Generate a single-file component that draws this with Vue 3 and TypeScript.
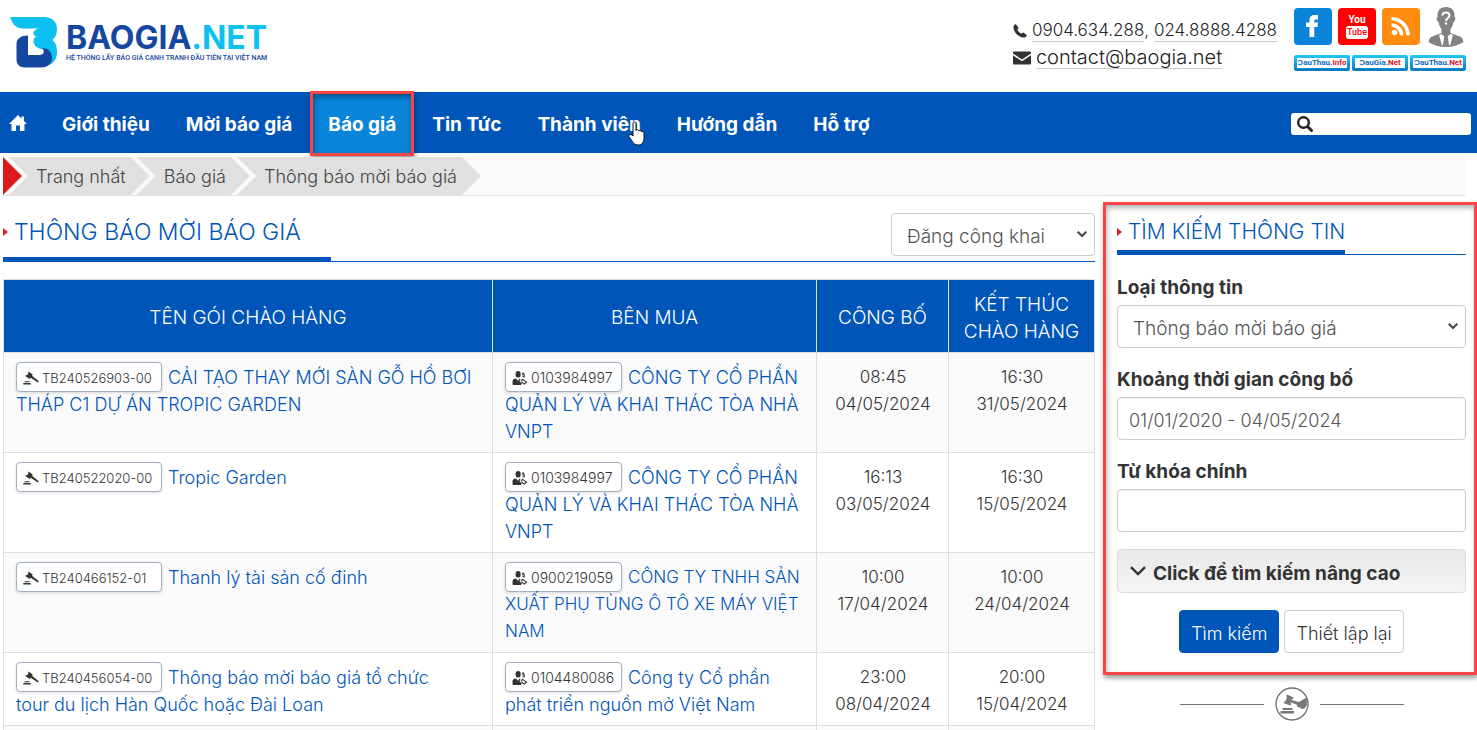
<script setup lang="ts">
import { ref } from 'vue'

interface Notice {
  code: string
  title: string
  buyerId: string
  buyer: string
  longBuyer?: boolean
  openTime: string
  openDate: string
  closeTime: string
  closeDate: string
}

const menu: string[] = ['Giới thiệu', 'Mời báo giá', 'Báo giá', 'Tin Tức', 'Thành viên', 'Hướng dẫn', 'Hỗ trợ']
const activeItem = 'Báo giá'
const hoveredItem = 'Thành viên'
const crumbs: string[] = ['Trang nhất', 'Báo giá', 'Thông báo mời báo giá']
const partners = [
  { head: 'ƆauThau.', tail: 'Info' },
  { head: 'ƆauGia.', tail: 'Net' },
  { head: 'ƆauThau.', tail: 'Net' },
]

const notices: Notice[] = [
  { code: 'TB240526903-00', title: 'CẢI TẠO THAY MỚI SÀN GỖ HỒ BƠI THÁP C1 DỰ ÁN TROPIC GARDEN', buyerId: '0103984997', buyer: 'CÔNG TY CỔ PHẦN QUẢN LÝ VÀ KHAI THÁC TÒA NHÀ VNPT', openTime: '08:45', openDate: '04/05/2024', closeTime: '16:30', closeDate: '31/05/2024' },
  { code: 'TB240522020-00', title: 'Tropic Garden', buyerId: '0103984997', buyer: 'CÔNG TY CỔ PHẦN QUẢN LÝ VÀ KHAI THÁC TÒA NHÀ VNPT', openTime: '16:13', openDate: '03/05/2024', closeTime: '16:30', closeDate: '15/05/2024' },
  { code: 'TB240466152-01', title: 'Thanh lý tài sản cố đinh', buyerId: '0900219059', buyer: 'CÔNG TY TNHH SẢN XUẤT PHỤ TÙNG Ô TÔ XE MÁY VIỆT NAM', longBuyer: true, openTime: '10:00', openDate: '17/04/2024', closeTime: '10:00', closeDate: '24/04/2024' },
  { code: 'TB240456054-00', title: 'Thông báo mời báo giá tổ chức\ntour du lịch Hàn Quốc hoặc Đài Loan', buyerId: '0104480086', buyer: 'Công ty Cổ phần\nphát triển nguồn mở Việt Nam', openTime: '23:00', openDate: '08/04/2024', closeTime: '20:00', closeDate: '15/04/2024' },
]

const visibility = ref('Đăng công khai')
const infoType = ref('Thông báo mời báo giá')
const period = ref('01/01/2020 - 04/05/2024')
const keyword = ref('')
const siteQuery = ref('')
</script>

<template>
  <div class="page">
    <header class="top">
      <a class="logo" href="#" aria-label="BAOGIA.NET">
        <svg class="mark" viewBox="0 0 48 51" aria-hidden="true">
          <path fill="#0cc0f0" d="M0 0H34C42.500 0 47 5 47 12C47 17 45.500 20 42.500 23C46 26 47 30 47 35C47 41 44.500 45.500 39.500 48L36 33C28 32 23.500 29 23.500 24.500C23.500 22 24.500 20.500 26.500 19.500C24 19 23 17 23.500 15.500C24.500 13 27 11.500 30 11.500H13C6 11.500 2.500 7 0 0Z" />
          <path fill="#1647a0" d="M18 18.500C11 18.500 6.500 21.500 6.500 27V42C6.500 47.500 9.500 50.500 15 50.500H31C38 50.500 42 46.500 42 41C42 35 38.500 31 32.500 31C35 35 33.500 38 29.500 38H18Z" />
        </svg>
        <span class="wordmark">
          <span class="brand">BAOGIA<span class="cyan">.NET</span></span>
          <span class="slogan">HỆ THỐNG LẤY BÁO GIÁ CẠNH TRANH ĐẦU TIÊN TẠI VIỆT NAM</span>
        </span>
      </a>

      <div class="reach">
        <div class="contact">
          <p>
            <svg class="ic-phone" viewBox="0 0 14 14" aria-hidden="true"><path fill="#333" d="M3.200.4L5.500 3.800C5.700 4.300 5.300 4.700 4.300 5.500C5 7.300 6.800 9 8.500 9.700C9.300 8.700 9.700 8.300 10.200 8.500L13.600 10.700C14 12.300 12.300 13.700 10.700 13.600C5.500 13.300.7 8.500.4 3.300C.3 1.700 1.700 0 3.200.4Z" /></svg>
            <a href="#">0904.634.288</a>, <a href="#">024.8888.4288</a>
          </p>
          <p>
            <svg class="ic-mail" viewBox="0 0 18 14" aria-hidden="true"><path fill="#333" d="M1 .5H17Q18 .5 18 1.500V2.500L9 8.500L0 2.500V1.500Q0 .5 1 .5ZM0 4.300L9 10.300L18 4.300V12.500Q18 13.500 17 13.500H1Q0 13.500 0 12.500Z" /></svg>
            <a class="mail" href="#">contact@baogia.net</a>
          </p>
        </div>

        <div class="links">
          <div class="social">
            <a class="tile fb" href="#" aria-label="Facebook">
              <svg viewBox="0 0 37 37"><path fill="#fff" d="M15.500 29V19H12V14.500H15.500V12C15.500 8.500 17.500 7 20.500 7H24V11.500H22C20.700 11.500 20.300 12 20.300 13V14.500H24L23.500 19H20.300V29Z" /></svg>
            </a>
            <a class="tile yt" href="#" aria-label="YouTube"><span>You</span><b>Tube</b></a>
            <a class="tile rss" href="#" aria-label="RSS">
              <svg viewBox="0 0 37 37"><circle cx="12.500" cy="24.500" r="2.800" fill="#fff" /><path fill="none" stroke="#fff" stroke-width="3.600" d="M9.500 17.200A10 10 0 0 1 19.600 27.300M9.500 10.800A16.500 16.500 0 0 1 26 27.300" /></svg>
            </a>
            <a class="user" href="#" aria-label="Tài khoản">
              <svg viewBox="0 0 36 40">
                <path fill="#828282" d="M18 0C24 0 27 4 26.500 10C28 10 27.500 14 25.500 15C25 18 24 20 22.500 22V26L33 30Q35.500 32 35.500 35Q28 40 18 40Q8 40 .5 35Q.5 32 3 30L13.500 26V22C12 20 11 18 10.500 15C8.500 14 8 10 9.500 10C9 4 12 0 18 0Z" />
                <path fill="#fff" d="M13.500 27L16.200 29.300L15 38H13.800L11 28ZM22.500 27L19.800 29.300L21 38H22.200L25 28Z" />
                <path fill="none" stroke="#fff" stroke-width="2" d="M14.500 8.500C14.500 4.500 21.500 4.500 21.500 8.500C21.500 11 18 11 18 14" /><circle cx="18" cy="16.500" r="1.200" fill="#fff" />
              </svg>
            </a>
          </div>
          <div class="partners">
            <a v-for="(p, i) in partners" :key="i" href="#">{{ p.head }}<em>{{ p.tail }}</em></a>
          </div>
        </div>
      </div>
    </header>

    <nav class="bar">
      <a class="home" href="#" aria-label="Trang nhất">
        <svg viewBox="0 0 18 16"><path fill="#fff" d="M9 0L12.500 3.500V1.500H15V6L18 9H15.500V16H11V10.500H7V16H2.500V9H0Z" /></svg>
      </a>
      <a v-for="m in menu" :key="m" class="item" :class="{ active: m === activeItem }" href="#">
        {{ m }}
        <svg v-if="m === hoveredItem" class="hand" viewBox="0 0 17 25" aria-hidden="true"><path fill="#fff" stroke="#111" stroke-width="1" d="M5 15V2.500C5 .3 8 .3 8 2.500V9.500C8.500 8 10.500 8.300 10.700 10C11.500 8.800 13.200 9.200 13.400 10.800C14.500 10 16 10.600 16 12.500V17C16 21 14 24 10.500 24C6.500 24 5.500 22.500 3.700 19.500L.8 15.500C.5 13.500 2.800 12.800 4 14.200Z" /></svg>
      </a>
      <label class="site-search">
        <svg viewBox="0 0 18 18" aria-hidden="true"><circle cx="7.500" cy="7.500" r="5.300" fill="none" stroke="#222" stroke-width="2.400" /><path stroke="#222" stroke-width="3" stroke-linecap="round" d="M12 12L15.500 15.500" /></svg>
        <input v-model="siteQuery" type="text" aria-label="Tìm kiếm trên trang" />
      </label>
    </nav>

    <div class="wrap">
      <div class="crumbs">
        <span class="lead"></span>
        <a v-for="c in crumbs" :key="c" href="#">{{ c }}</a>
      </div>

      <div class="cols">
        <main>
          <div class="headline">
            <h1>THÔNG BÁO MỜI BÁO GIÁ</h1>
            <span class="drop">
              <select v-model="visibility" aria-label="Hình thức đăng"><option>Đăng công khai</option></select>
              <svg viewBox="0 0 10 6" aria-hidden="true"><path fill="none" stroke="#444" stroke-width="2" d="M.7.7L5 5L9.300.7" /></svg>
            </span>
          </div>

          <table>
            <colgroup><col class="c-name" /><col class="c-buyer" /><col class="c-open" /><col class="c-close" /></colgroup>
            <thead>
              <tr><th>TÊN GÓI CHÀO HÀNG</th><th>BÊN MUA</th><th>CÔNG BỐ</th><th>KẾT THÚC<br />CHÀO HÀNG</th></tr>
            </thead>
            <tbody>
              <tr v-for="n in notices" :key="n.code">
                <td>
                  <a class="badge code" href="#"><svg viewBox="0 0 16 13" aria-hidden="true"><path fill="#333" d="M5.500 0L9.800 3L9 4.300L15.800 9.800L14.800 11L7.700 6.300L6.800 7.500L2.200 4.600L3 3.500L3.800 3.900L5.700 1.400L4.900.9ZM1.500 9.700H6.500V10.700H1.500ZM.3 11.500H7.700V13H.3Z" /></svg>{{ n.code }}</a>
                  <a class="name" href="#">{{ n.title }}</a>
                </td>
                <td :class="{ long: n.longBuyer }">
                  <a class="badge" href="#"><svg viewBox="0 0 16 15" aria-hidden="true"><path fill="#333" d="M6 0A2.700 2.700 0 0 1 8.700 2.700V4.200A2.700 2.700 0 0 1 3.300 4.200V2.700A2.700 2.700 0 0 1 6 0ZM3.500 8L6 10.500L7.500 8L8.500 8.500L7.500 11L10 13.500L9 15H1Q0 15 0 14V11Q0 8.500 3.500 8Z" /><path fill="none" stroke="#333" stroke-width="1.200" d="M9 10.500L11 9L15 12L12.500 14L9.500 11.500M12.500 2.300H11V4H12.500V6H10.800" /></svg>{{ n.buyerId }}</a>
                  <a class="name" href="#">{{ n.buyer }}</a>
                </td>
                <td class="when">{{ n.openTime }}<br />{{ n.openDate }}</td>
                <td class="when">{{ n.closeTime }}<br />{{ n.closeDate }}</td>
              </tr>
              <tr><td></td><td></td><td></td><td></td></tr>
            </tbody>
          </table>
        </main>

        <aside>
          <form class="finder" @submit.prevent>
            <div class="subhead"><h2>TÌM KIẾM THÔNG TIN</h2></div>

            <label class="field-label" for="info-type">Loại thông tin</label>
            <span class="drop wide">
              <select id="info-type" v-model="infoType"><option>Thông báo mời báo giá</option></select>
              <svg viewBox="0 0 10 6" aria-hidden="true"><path fill="none" stroke="#444" stroke-width="2" d="M.7.7L5 5L9.300.7" /></svg>
            </span>

            <label class="field-label" for="period">Khoảng thời gian công bố</label>
            <input id="period" v-model="period" class="text" type="text" />

            <label class="field-label" for="keyword">Từ khóa chính</label>
            <input id="keyword" v-model="keyword" class="text" type="text" />

            <button class="advanced" type="button">
              <svg viewBox="0 0 16 10" aria-hidden="true"><path fill="none" stroke="#333" stroke-width="2.400" d="M1 1.200L8 8L15 1.200" /></svg>Click để tìm kiếm nâng cao
            </button>

            <div class="actions">
              <button class="go" type="submit">Tìm kiếm</button>
              <button class="reset" type="reset">Thiết lập lại</button>
            </div>
          </form>

          <div class="divider">
            <i></i>
            <svg viewBox="0 0 34 34" aria-hidden="true">
              <circle cx="17" cy="17" r="16" fill="#fff" stroke="#6e6e6e" stroke-width="1.300" />
              <path fill="#777" d="M12 7.500L18.500 10.500L18 12L17 12L15.500 16L16.200 17L15.500 18.500L8.500 16L9.300 14.500L10.300 14.600L12 10.500L11.300 9.300ZM16.500 13L24 15L31.500 10.500L32 18L29.500 21.500L27 22L25 20.500L22.500 20L21.500 17.500L16 15.500ZM7.500 21H17.500V23H7.500ZM5.500 24H19V26.500H5.500Z" />
            </svg>
            <i></i>
          </div>
        </aside>
      </div>
    </div>
  </div>
</template>

<style>
body {
  margin: 0;
  background: #fff;
}
</style>

<style scoped>
.page {
  height: 100vh;
  overflow: hidden;
  font-family: Inter, "Liberation Sans", sans-serif;
  font-size: 18px;
  font-weight: 300;
  line-height: 27px;
  color: #333;
}
.page * {
  box-sizing: border-box;
}
a {
  color: #0055b8;
  text-decoration: none;
}
p, h1, h2 {
  margin: 0;
  font-weight: 300;
}
input, select, button {
  font: inherit;
  color: inherit;
}

.top {
  display: flex;
  justify-content: space-between;
  height: 92px;
  padding: 0 11px 0 10px;
}
.logo {
  display: flex;
  gap: 8px;
  padding-top: 17px;
  height: 68px;
}
.mark {
  width: 48px;
  height: 51px;
}
.wordmark {
  display: flex;
  flex-direction: column;
  padding-top: 6px;
  color: #1647a0;
}
.brand {
  font-size: 32px;
  line-height: 30px;
  font-weight: 700;
}
.cyan {
  color: #0cc0f0;
}
.slogan {
  font-family: Roboto, sans-serif;
  font-size: 7px;
  line-height: 10px;
  font-weight: 500;
}
.reach {
  display: flex;
  gap: 17px;
}
.contact {
  padding-top: 17px;
}
.contact p {
  display: flex;
  align-items: center;
  height: 27px;
  font-size: 17px;
  white-space: pre;
}
.contact a {
  color: #222;
  line-height: 22px;
  border-bottom: 1px solid #ccc;
}
.contact .mail {
  font-size: 20px;
}
.ic-phone {
  width: 14px;
  height: 14px;
  margin-right: 5px;
}
.ic-mail {
  width: 18px;
  height: 14px;
  margin-right: 5px;
}
.links {
  padding-top: 7px;
}
.social {
  display: flex;
  gap: 6px;
  height: 40px;
}
.tile {
  width: 38px;
  height: 37px;
  margin-top: 1px;
  border-radius: 4px;
}
.tile svg {
  display: block;
  width: 37px;
  height: 37px;
}
.fb {
  background: #0984d8;
}
.yt {
  display: flex;
  flex-direction: column;
  align-items: center;
  padding-top: 6px;
  background: #f00;
  color: #fff;
  font: 700 10px/11px Roboto, sans-serif;
}
.yt b {
  margin-top: 1px;
  padding: 0 1px;
  border-radius: 3px;
  background: #fff;
  color: #f00;
  font-size: 9px;
  font-weight: 500;
  line-height: 13px;
}
.rss {
  background: #ff8c0e;
}
.user svg {
  display: block;
  width: 36px;
  height: 40px;
}
.user {
  margin-left: 2px;
}
.partners {
  display: flex;
  gap: 2px;
  margin-top: 8px;
}
.partners a {
  width: 56px;
  height: 16px;
  border: 3px solid transparent;
  border-radius: 2px;
  background: linear-gradient(#fff, #fff) padding-box, linear-gradient(#22c8f8, #0878c0) border-box;
  text-align: center;
  font: 700 8px/10px Roboto, sans-serif;
  color: #0a6ab8;
}
.partners em {
  font-style: normal;
  color: #e8101c;
}

.bar {
  display: flex;
  align-items: stretch;
  height: 61px;
  padding: 0 6px 0 9px;
  background: #0055b8;
}
.bar a {
  position: relative;
  display: flex;
  align-items: center;
  color: #fff;
  font-size: 19px;
  font-weight: 700;
}
.home {
  margin-right: 17px;
}
.home svg {
  width: 18px;
  height: 16px;
}
.item {
  padding: 4px 18px 0;
}
.item.active {
  background: #0984d8;
}
.item.active::after {
  content: "";
  position: absolute;
  inset: -1px 0 -3px 0;
  border: 3px solid #f94545;
  box-shadow: 1px 3px 5px rgba(0, 0, 0, 0.4), inset 1px 3px 5px rgba(0, 0, 0, 0.4);
}
.hand {
  position: absolute;
  right: 14px;
  top: 29px;
  width: 17px;
  height: 25px;
}
.site-search {
  display: flex;
  align-items: center;
  align-self: center;
  width: 180px;
  height: 22px;
  margin: 2px 0 0 auto;
  padding-left: 5px;
  border-radius: 3px;
  background: #fff;
}
.site-search svg {
  width: 18px;
  height: 18px;
}
.site-search input {
  flex: 1;
  min-width: 0;
  height: 20px;
  border: 0;
  outline: 0;
  background: transparent;
  font-size: 14px;
}

.wrap {
  padding: 4px 11px 0 3px;
}
.crumbs {
  display: flex;
  height: 39px;
  border-bottom: 1px solid #e4e4e4;
  background: #fafafa;
}
.crumbs a {
  margin-left: -13px;
  padding: 1px 24px 0 27px;
  background: #e0e0e0;
  clip-path: polygon(0 0, calc(100% - 19px) 0, 100% 50%, calc(100% - 19px) 100%, 0 100%, 19px 50%);
  color: #444;
  line-height: 37px;
}
.lead {
  width: 19px;
  background: #dc1a1c;
  clip-path: polygon(0 0, 100% 50%, 0 100%);
}

.cols {
  display: grid;
  grid-template-columns: minmax(0, 1fr) 349px;
  gap: 22px;
}
.headline {
  display: flex;
  justify-content: space-between;
  height: 66px;
  border-bottom: 1px solid #0055b8;
}
h1, h2 {
  display: flex;
  align-items: center;
  color: #0055b8;
  font-size: 23px;
  line-height: 30px;
  white-space: nowrap;
}
h1::before, h2::before {
  content: "";
  margin-right: 6px;
  border-left: 5px solid #dc1a1c;
  border-top: 4px solid transparent;
  border-bottom: 4px solid transparent;
}
h1 {
  height: 66px;
  padding: 10px 30px 0 0;
  border-bottom: 5px solid #0055b8;
}
.drop {
  position: relative;
  display: block;
  width: 204px;
  height: 43px;
  margin-top: 17px;
}
.drop select {
  display: block;
  width: 100%;
  height: 100%;
  padding: 3px 30px 0 15px;
  appearance: none;
  border: 1px solid #ccc;
  border-radius: 4px;
  background: #fff;
  color: #555;
  font-size: 19px;
}
.drop svg {
  position: absolute;
  right: 8px;
  top: 18px;
  width: 10px;
  height: 6px;
  pointer-events: none;
}
.wide {
  width: 100%;
  margin: 0;
}

table {
  width: 100%;
  margin-top: 17px;
  border-collapse: collapse;
  table-layout: fixed;
}
.c-name {
  width: 489px;
}
.c-buyer {
  width: auto;
}
.c-open {
  width: 132px;
}
.c-close {
  width: 146px;
}
th, td {
  border: 1px solid #ddd;
}
th {
  height: 73px;
  padding: 3px 10px 0;
  background: #0055b8;
  color: #fff;
  font-size: 19px;
  font-weight: 300;
}
td {
  padding: 11px 11px 7px 12px;
  vertical-align: top;
}
tbody tr:nth-child(odd) {
  background: #fafafa;
}
.when {
  font-size: 17px;
  text-align: center;
}
.long {
  font-size: 17px;
}
.name {
  white-space: pre-line;
}
.badge {
  display: inline-block;
  min-width: 117px;
  height: 30px;
  margin: -2px 6px -2px 0;
  padding: 2px 6px 0;
  border: 1px solid #a3b0bf;
  border-radius: 4px;
  background: #fff;
  box-shadow: 0 1px 3px rgba(0, 0, 0, 0.15);
  color: #333;
  font-size: 14px;
  line-height: 26px;
  vertical-align: top;
  white-space: nowrap;
}
.code {
  min-width: 146px;
  font-size: 13px;
}
.badge svg {
  width: 16px;
  height: 14px;
  margin-right: 3px;
  vertical-align: -2px;
}

.finder {
  position: relative;
  padding-bottom: 22px;
}
.finder::after {
  content: "";
  position: absolute;
  inset: 6px -11px 0 -14px;
  border: 3px solid #f94545;
  box-shadow: 1px 3px 5px rgba(0, 0, 0, 0.4), inset 1px 3px 5px rgba(0, 0, 0, 0.3);
  pointer-events: none;
}
.subhead {
  display: flex;
  height: 59px;
  margin-bottom: 19px;
  border-bottom: 1px solid #0055b8;
}
h2 {
  height: 59px;
  padding-top: 17px;
  border-bottom: 5px solid #0055b8;
  font-size: 21px;
}
.field-label {
  display: block;
  margin-bottom: 4px;
  font-size: 19px;
  font-weight: 700;
}
.text {
  display: block;
  width: 100%;
  height: 43px;
  padding: 3px 11px 0;
  border: 1px solid #ccc;
  border-radius: 4px;
  background: #fff;
  box-shadow: inset 0 1px 1px rgba(0, 0, 0, 0.08);
  color: #555;
}
.drop + .field-label, .text + .field-label {
  margin-top: 18px;
}
.advanced {
  display: flex;
  align-items: center;
  width: 100%;
  height: 44px;
  margin-top: 17px;
  padding: 4px 12px 0;
  border: 1px solid #ddd;
  border-radius: 4px;
  background: linear-gradient(#e8e8e8, #f5f5f5);
  font-size: 19px;
  font-weight: 700;
}
.advanced svg {
  width: 16px;
  height: 10px;
  margin: 0 7px 4px 0;
}
.actions {
  display: flex;
  justify-content: center;
  gap: 5px;
  margin-top: 17px;
}
.actions button {
  height: 43px;
  padding: 3px 11px 0;
  border: 1px solid #ccc;
  border-radius: 4px;
  background: #fff;
}
.actions .go {
  border-color: #0055b8;
  background: #0055b8;
  color: #fff;
}
.divider {
  display: flex;
  align-items: center;
  justify-content: center;
  gap: 11px;
  margin-top: 12px;
}
.divider i {
  width: 84px;
  border-top: 1px solid #777;
}
.divider svg {
  width: 34px;
  height: 34px;
}
</style>
